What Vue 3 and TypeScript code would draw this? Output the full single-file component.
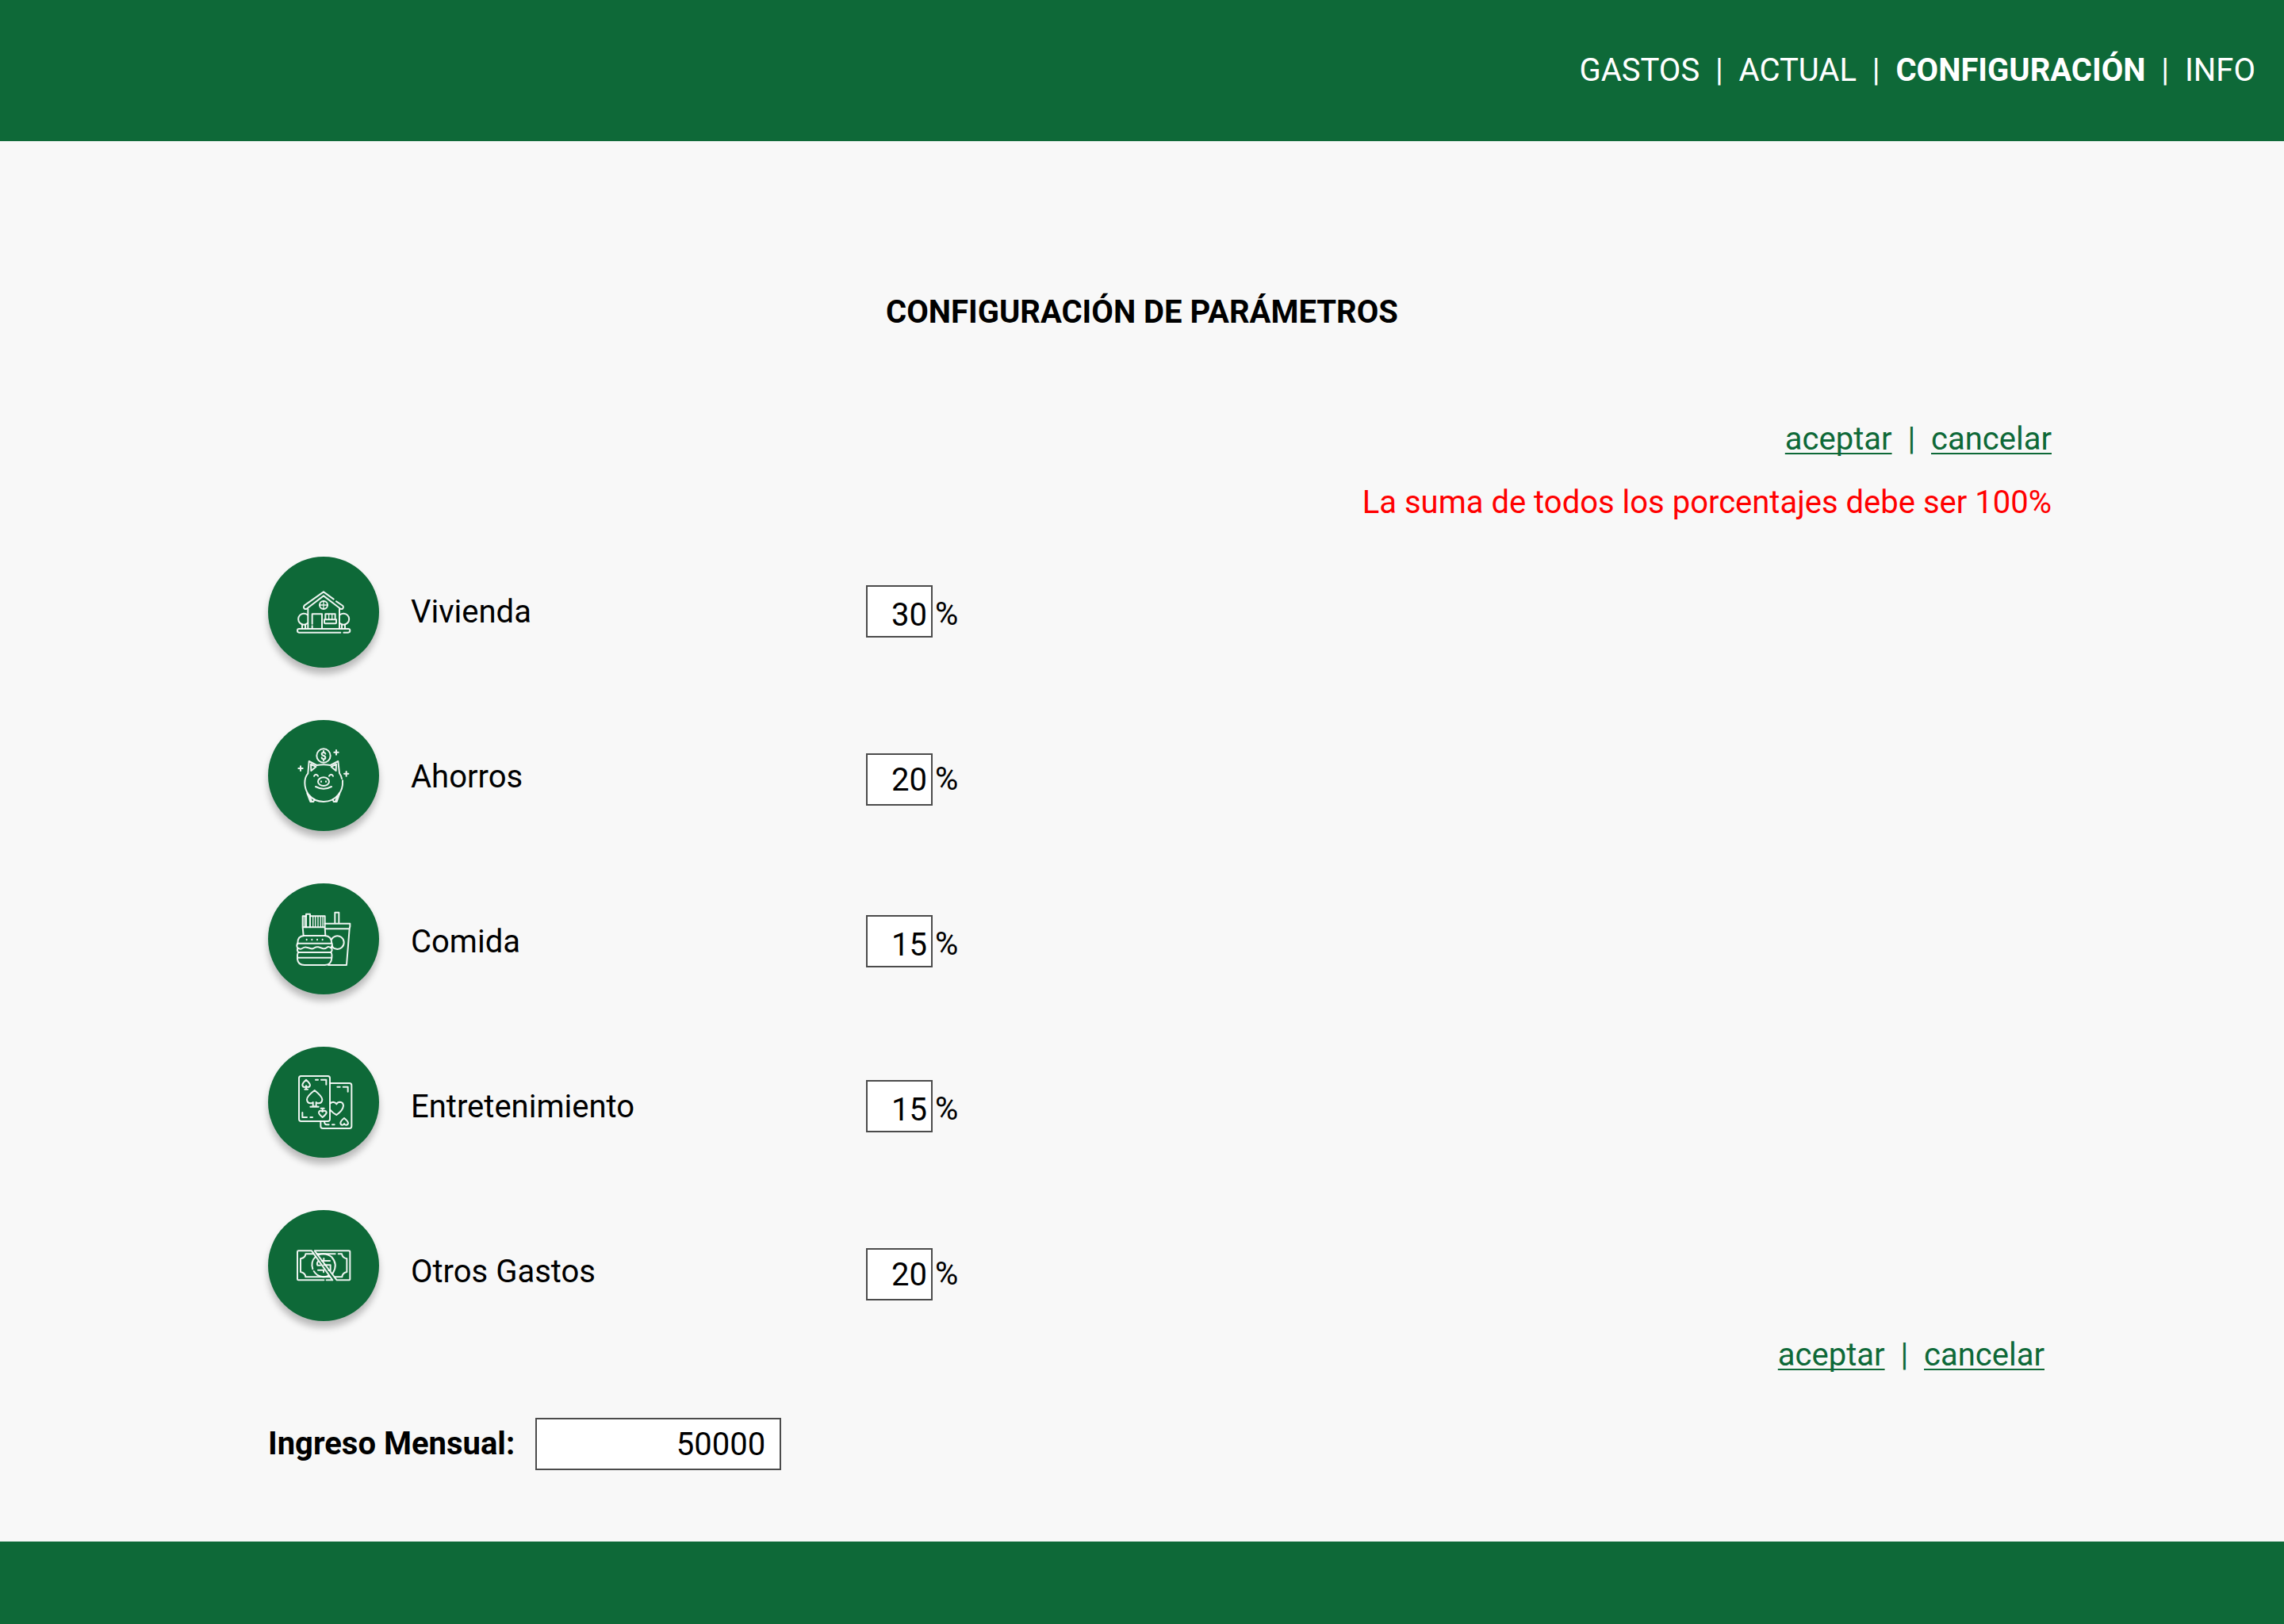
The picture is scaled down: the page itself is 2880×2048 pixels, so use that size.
<script setup lang="ts">
import { reactive, ref } from 'vue'

interface Category {
  id: string
  name: string
  percent: string
  anchor: 'start' | 'end'
}

const sections = [
  { name: 'GASTOS', active: false },
  { name: 'ACTUAL', active: false },
  { name: 'CONFIGURACIÓN', active: true },
  { name: 'INFO', active: false },
]

const categories = reactive<Category[]>([
  { id: 'vivienda', name: 'Vivienda', percent: '30', anchor: 'start' },
  { id: 'ahorros', name: 'Ahorros', percent: '20', anchor: 'end' },
  { id: 'comida', name: 'Comida', percent: '15', anchor: 'start' },
  { id: 'entretenimiento', name: 'Entretenimiento', percent: '15', anchor: 'start' },
  { id: 'otros', name: 'Otros Gastos', percent: '20', anchor: 'end' },
])

const income = ref('50000')
const separator = '\u00a0 | \u00a0'
</script>

<template>
  <div class="page">
    <header class="top-bar">
      <nav class="nav">
        <template v-for="(section, i) in sections" :key="section.name">
          <span v-if="i > 0" class="sep">{{ separator }}</span>
          <a href="#" :class="{ active: section.active }">{{ section.name }}</a>
        </template>
      </nav>
    </header>

    <main class="content">
      <h1 class="title">CONFIGURACIÓN DE PARÁMETROS</h1>

      <div class="notice">
        <div class="actions">
          <a href="#">aceptar</a><span class="sep">{{ separator }}</span><a href="#">cancelar</a>
        </div>
        <p class="error">La suma de todos los porcentajes debe ser 100%</p>
      </div>

      <form class="form" @submit.prevent>
        <div class="categories">
          <div class="icons" aria-hidden="true">
            <span class="badge">
              <svg viewBox="162 144 204 204">
                <path d="M302 197L264 169L191 221Q186 229 193 234H199L264 184L329 234H335Q341 229 337 222L312 205" />
                <path d="M205 234V306M324 234V306" />
                <circle cx="264" cy="219" r="15" />
                <path class="thin" d="M264 204V234M249 219H279" />
                <path d="M221 290V253H258V306M221 298V306" />
                <path d="M271 274V253H308V274M267 274H312V286Q312 289 309 289H270Q267 289 267 286Z" />
                <path class="thin" d="M284 254V273M296 254V273" />
                <path d="M203 256A21 21 0 1 0 203 288M326 256A21 21 0 1 1 326 288" />
                <path d="M183 294V307M195 294V307M333 294V307M345 294V307" />
                <path d="M328 323H171Q165 323 165 316T171 309H357Q364 309 364 316T357 323H340" />
              </svg>
            </span>
            <span class="badge">
              <svg viewBox="162 144 204 204">
                <circle cx="264" cy="171" r="26" />
                <path d="M271 164Q270 159 264 159Q257 159 257 165Q257 169 264 171Q271 173 271 179Q271 184 264 184Q257 184 257 178M264 153V159M264 184V190" />
                <path d="M333 258Q331 247 324 237L319 192L290 207Q264 202 238 207L209 192L205 238Q193 251 193 274Q193 298 207 318Q229 345 264 345T320 318Q338 298 336 265" />
                <path d="M216 203L235 213L217 228ZM312 203L293 213L311 228Z" />
                <path d="M202 313L214 345H226L229 336M212 326L219 343M325 313L314 345H302L299 336M316 326L309 343" />
                <path d="M228 248Q235 237 243 248M285 248Q293 237 300 248" />
                <ellipse cx="264" cy="269" rx="21" ry="16" />
                <path d="M255 268V270M273 268V270" />
                <path d="M234 288Q264 304 294 288" />
                <path d="M312 150V167M304 158H320M177 211V228M169 219H185M350 231V248M342 239H358" />
              </svg>
            </span>
            <span class="badge">
              <svg viewBox="168 150 204 204">
                <path d="M191 208V166H204V158H219V166H275V208ZM191 208L194 240M275 208L277 240" />
                <path d="M204 166V208M219 166V208" />
                <path class="thin" d="M198 168V207M230 168V207M239 168V207M249 168V207M259 168V207M267 168V207" />
                <path d="M313 194V152H328V194M275 194H370V205L368 214H277M368 214L357 351H288" />
                <path d="M300 254A25 25 0 1 1 301 279" />
                <path d="M172 269Q171 241 197 240H275Q300 241 301 269Z" />
                <path d="M206 254V256M226 254V256M246 254V256M266 254V256" />
                <path d="M172 269Q166 278 172 286Q181 293 189 288T205 284T220 288T235 286T250 283T266 288T282 285T297 286Q306 279 301 269" />
                <path d="M172 288Q168 296 175 303H297Q305 296 300 286" />
                <path d="M175 303Q170 307 171 323H301Q303 307 297 303M171 323V328Q173 351 198 351H275Q300 350 301 323" />
              </svg>
            </span>
            <span class="badge">
              <svg viewBox="162 150 204 204">
                <rect x="171" y="153" width="117" height="171" rx="8" />
                <path d="M288 180H362Q370 180 370 188V343Q370 351 362 351H261Q253 351 253 343V324" />
                <path d="M198 167Q184 179 184 187Q185 195 192 195Q197 195 198 190Q200 195 205 195Q212 195 213 187Q212 179 198 167ZM198 190V203M193 203H204" />
                <path d="M230 207Q201 229 201 242Q202 256 215 256Q221 256 224 252V268H236V252Q239 256 245 256Q258 256 259 242Q258 229 230 207ZM214 269H245" />
                <path d="M260 309Q246 298 246 291Q247 284 253 284Q258 284 260 288Q262 284 267 284Q274 284 275 291Q274 298 260 309ZM260 288V275M254 275H266" />
                <path d="M234 167H243M255 167H274V185M184 291V309H201M214 309H222" />
                <path d="M289 257Q294 251 301 251Q309 252 313 259Q317 251 326 251Q338 252 339 265Q337 283 313 300Q300 294 289 281" />
                <path d="M342 312Q328 323 328 331Q329 338 335 338Q340 338 342 333Q344 338 349 338Q356 338 357 331Q356 323 342 312Z" />
                <path d="M316 194H326M338 194H356V212M267 325Q267 337 276 337H284M297 337H305" />
              </svg>
            </span>
            <span class="badge">
              <svg viewBox="168 150 204 204">
                <path d="M271 307H175Q171 307 171 303V200Q171 196 175 196H225L304 307H281" />
                <path d="M236 196H365Q370 196 370 200V303Q370 307 365 307H320Z" />
                <path d="M231 208H202Q201 222 183 226V276Q201 280 202 295H293" />
                <path d="M244 208H314M326 208H339Q341 222 358 226V276Q341 280 340 295H314" />
                <path d="M229 265Q220 238 240 218M233 273Q244 291 264 294Q279 296 290 290" />
                <path d="M249 212Q277 201 300 219Q326 247 305 281" />
                <path d="M271 225V234H294M263 234H270M250 235Q243 242 247 251H258M271 250H296V270H289M249 269H270V277" />
              </svg>
            </span>
          </div>

          <div class="labels">
            <label v-for="c in categories" :key="c.id" :for="c.id">{{ c.name }}</label>
          </div>

          <div class="fields">
            <div v-for="c in categories" :key="c.id" class="field">
              <input :id="c.id" v-model="c.percent" type="text" inputmode="numeric" :class="['box', c.anchor]" />
              <span class="unit">%</span>
            </div>
          </div>
        </div>

        <div class="actions lower">
          <a href="#">aceptar</a><span class="sep">{{ separator }}</span><a href="#">cancelar</a>
        </div>

        <div class="income">
          <label for="income">Ingreso Mensual:</label>
          <input id="income" v-model="income" type="text" inputmode="numeric" class="box wide" />
        </div>
      </form>
    </main>

    <footer class="bottom-bar"></footer>
  </div>
</template>

<style>
body {
  margin: 0;
  background: #f8f8f8;
}
</style>

<style scoped>
.page {
  display: flex;
  flex-direction: column;
  min-height: 100vh;
  font-family: Roboto, "Liberation Sans", sans-serif;
  font-size: 40px;
  line-height: 48px;
  color: #000;
}

.top-bar {
  display: flex;
  align-items: center;
  justify-content: flex-end;
  box-sizing: border-box;
  min-height: 178px;
  padding: 0 36px;
  background: #0e6938;
}

.nav {
  display: flex;
  color: #fff;
}

.nav a {
  color: inherit;
  text-decoration: none;
}

.nav .active {
  font-weight: 700;
}

.sep {
  white-space: pre;
}

.content {
  flex: 1;
}

.title {
  margin: 192px 0 112px;
  font-size: 40px;
  line-height: 48px;
  font-weight: 700;
  text-align: center;
}

.notice {
  display: flex;
  flex-direction: column;
  align-items: flex-end;
  gap: 32px;
  padding-right: 293px;
}

.actions {
  color: #0e6938;
}

.actions a {
  color: inherit;
  text-decoration: underline;
  text-decoration-thickness: 2px;
  text-decoration-skip-ink: none;
  text-underline-offset: 4px;
}

.error {
  margin: 0;
  color: #f00;
}

.form {
  padding: 44px 302px 90px 338px;
}

.categories {
  display: grid;
  grid-template-columns: 140px 534px auto;
  column-gap: 40px;
  align-items: start;
}

.icons {
  display: flex;
  flex-direction: column;
  gap: 66px;
}

.badge {
  display: flex;
  align-items: center;
  justify-content: center;
  height: 140px;
  border-radius: 50%;
  background: #0e6938;
  box-shadow: 0 8px 8px rgba(0, 0, 0, 0.25);
}

.badge svg {
  width: 68px;
  height: 68px;
  overflow: visible;
  fill: none;
  stroke: #fff;
  stroke-opacity: 0.92;
  stroke-width: 6;
  stroke-linecap: round;
  stroke-linejoin: round;
}

.badge .thin {
  stroke-width: 4;
}

.labels {
  display: flex;
  flex-direction: column;
  align-items: flex-start;
  gap: 160px;
  padding-top: 46px;
}

.fields {
  display: flex;
  flex-direction: column;
  gap: 138px;
  padding-top: 36px;
}

.field {
  display: flex;
  align-items: center;
  gap: 3px;
  height: 70px;
}

.unit {
  padding-top: 4px;
}

.box {
  box-sizing: border-box;
  width: 84px;
  height: 66px;
  margin: 0;
  padding: 0 5px;
  border: 2px solid #4b4b4b;
  border-radius: 0;
  outline: none;
  background: #fff;
  font: inherit;
  color: inherit;
  text-align: right;
}

.box.start {
  align-self: flex-start;
  padding-top: 8px;
}

.box.end {
  align-self: flex-end;
}

.box.wide {
  width: 310px;
  padding: 0 18px;
}

.lower {
  margin: 19px 0 55px;
  text-align: right;
}

.income {
  display: flex;
  align-items: center;
  gap: 26px;
}

.income label {
  font-weight: 700;
}

.bottom-bar {
  height: 104px;
  background: #0e6938;
}
</style>
